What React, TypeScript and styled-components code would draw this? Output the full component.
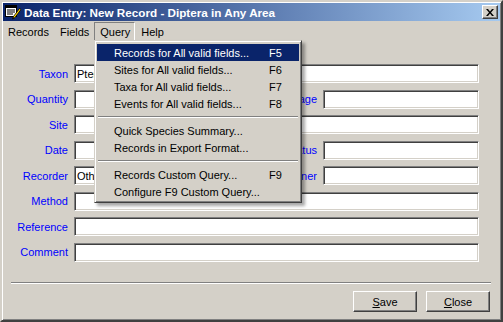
import styled, { createGlobalStyle } from 'styled-components';

const GlobalStyle = createGlobalStyle`
  html, body {
    margin: 0;
    padding: 0;
    background: #d4d0c8;
  }
  body {
    font-family: "Liberation Sans", Arial, sans-serif;
    font-size: 11px;
    color: #000;
  }
`;

const Window = styled.div`
  position: relative;
  width: 503px;
  height: 322px;
  box-sizing: border-box;
  background: #d4d0c8;
  border: 2px solid;
  border-color: #d4d0c8 #404040 #404040 #d4d0c8;
  box-shadow: inset 1px 1px #fff, inset -1px -1px #808080;
  padding: 1px;
  display: flex;
  flex-direction: column;
`;

const TitleBar = styled.div`
  height: 18px;
  display: flex;
  align-items: center;
  padding: 0 2px 0 2px;
  background: linear-gradient(to right, #0a246a, #a6caf0);
  color: #fff;
`;

const TitleText = styled.span`
  flex: 1;
  margin-left: 3px;
  font-weight: bold;
  font-size: 11.7px;
  white-space: nowrap;
`;

const CloseButton = styled.div`
  width: 16px;
  height: 14px;
  box-sizing: border-box;
  background: #d4d0c8;
  border: 1px solid;
  border-color: #fff #404040 #404040 #fff;
  box-shadow: inset -1px -1px #808080;
  display: flex;
  align-items: center;
  justify-content: center;
`;

const MenuBar = styled.div`
  height: 19px;
  margin-top: 1px;
  display: flex;
  align-items: stretch;
`;

const MenuBarItem = styled.div<{ $open?: boolean }>`
  display: flex;
  align-items: center;
  padding: 0 4px 0 5px;
  box-sizing: border-box;
  border: 1px solid;
  border-color: ${(p) => (p.$open ? '#808080 #fff #fff #808080' : 'transparent')};
  &:first-child {
    margin-left: -1px;
  }
`;

const Dropdown = styled.div`
  position: absolute;
  left: 92px;
  top: 38px;
  width: 208px;
  box-sizing: border-box;
  background: #d4d0c8;
  border: 1px solid;
  border-color: #d4d0c8 #404040 #404040 #d4d0c8;
  box-shadow: inset 1px 1px #fff, inset -1px -1px #808080, 3px 3px 3px rgba(0, 0, 0, 0.35);
  padding: 3px 2px 2px 2px;
  z-index: 5;
`;

const DropItem = styled.div<{ $active?: boolean }>`
  height: 17px;
  display: flex;
  align-items: center;
  padding-left: 17px;
  background: ${(p) => (p.$active ? '#0a246a' : 'transparent')};
  color: ${(p) => (p.$active ? '#fff' : '#000')};
  white-space: nowrap;
`;

const DropLabel = styled.span`
  width: 155px;
`;

const DropSep = styled.div`
  height: 1px;
  margin: 4px 1px;
  background: #808080;
  border-bottom: 1px solid #fff;
`;

const Form = styled.div`
  display: grid;
  grid-template-columns: 65px 1fr;
  column-gap: 6px;
  row-gap: 6.5px;
  padding: 23px 21px 0 0;
`;

const Label = styled.div`
  height: 19px;
  display: flex;
  align-items: center;
  justify-content: flex-end;
  color: #0000ff;
  white-space: nowrap;
`;

const Field = styled.div<{ $w?: number }>`
  height: 19px;
  box-sizing: border-box;
  ${(p) => (p.$w ? `width: ${p.$w}px; flex: none;` : 'flex: 1;')}
  background: #fff;
  border: 1px solid;
  border-color: #808080 #fff #fff #808080;
  box-shadow: inset 1px 1px #404040, inset -1px -1px #d4d0c8;
  padding: 0 3px 0 2px;
  display: flex;
  align-items: center;
  white-space: nowrap;
  overflow: hidden;
`;

const Pair = styled.div`
  display: flex;
  align-items: center;
  gap: 6px;
`;

const PairLabel = styled(Label)`
  flex: 1;
`;

const Footer = styled.div`
  margin-top: auto;
  padding: 0 9px 7px 8px;
`;

const Separator = styled.div`
  height: 1px;
  background: #808080;
  border-bottom: 1px solid #fff;
`;

const Buttons = styled.div`
  display: flex;
  justify-content: flex-end;
  gap: 9px;
  margin-top: 7px;
  padding-right: 1px;
`;

const Button = styled.div`
  width: 64px;
  height: 21px;
  box-sizing: border-box;
  background: #d4d0c8;
  border: 1px solid;
  border-color: #fff #404040 #404040 #fff;
  box-shadow: inset -1px -1px #808080;
  display: flex;
  align-items: center;
  justify-content: center;
`;

function AppIcon() {
  return (
    <svg width="16" height="16" viewBox="0 0 16 16">
      <rect x="0.5" y="1.5" width="11" height="11" fill="#fff" stroke="#000" />
      <rect x="1" y="2" width="10" height="2" fill="#000" />
      <line x1="2" y1="6" x2="10" y2="6" stroke="#000" />
      <line x1="2" y1="8" x2="10" y2="8" stroke="#000" />
      <line x1="2" y1="10" x2="8" y2="10" stroke="#000" />
      <path d="M14.5 4.5 L8.5 12.5 L7.5 15 L10 13.5 L16 5.5 Z" fill="#ffd800" stroke="#000" strokeWidth="0.8" />
      <path d="M7.5 15 L8.2 13.2 L9.2 14 Z" fill="#000" />
    </svg>
  );
}

function CloseGlyph() {
  return (
    <svg width="8" height="7" viewBox="0 0 8 7">
      <path d="M0 0 L2 0 L4 2.5 L6 0 L8 0 L5 3.5 L8 7 L6 7 L4 4.5 L2 7 L0 7 L3 3.5 Z" fill="#000" />
    </svg>
  );
}

export default function App() {
  return (
    <>
      <GlobalStyle />
      <Window>
        <TitleBar>
          <AppIcon />
          <TitleText>Data Entry: New Record - Diptera in Any Area</TitleText>
          <CloseButton>
            <CloseGlyph />
          </CloseButton>
        </TitleBar>
        <MenuBar>
          <MenuBarItem>Records</MenuBarItem>
          <MenuBarItem>Fields</MenuBarItem>
          <MenuBarItem $open>Query</MenuBarItem>
          <MenuBarItem>Help</MenuBarItem>
        </MenuBar>

        <Form>
          <Label>Taxon</Label>
          <Field>Pterostichus</Field>

          <Label>Quantity</Label>
          <Pair>
            <Field $w={180} />
            <PairLabel>Stage</PairLabel>
            <Field $w={156} />
          </Pair>

          <Label>Site</Label>
          <Field />

          <Label>Date</Label>
          <Pair>
            <Field $w={180} />
            <PairLabel>Status</PairLabel>
            <Field $w={156} />
          </Pair>

          <Label>Recorder</Label>
          <Pair>
            <Field $w={180}>Other</Field>
            <PairLabel>Determiner</PairLabel>
            <Field $w={156} />
          </Pair>

          <Label>Method</Label>
          <Field />

          <Label>Reference</Label>
          <Field />

          <Label>Comment</Label>
          <Field />
        </Form>

        <Footer>
          <Separator />
          <Buttons>
            <Button>
              <span>
                <u>S</u>ave
              </span>
            </Button>
            <Button>
              <span>
                <u>C</u>lose
              </span>
            </Button>
          </Buttons>
        </Footer>

        <Dropdown>
          <DropItem $active>
            <DropLabel>Records for All valid fields...</DropLabel>F5
          </DropItem>
          <DropItem>
            <DropLabel>Sites for All valid fields...</DropLabel>F6
          </DropItem>
          <DropItem>
            <DropLabel>Taxa for All valid fields...</DropLabel>F7
          </DropItem>
          <DropItem>
            <DropLabel>Events for All valid fields...</DropLabel>F8
          </DropItem>
          <DropSep />
          <DropItem>
            <DropLabel>Quick Species Summary...</DropLabel>
          </DropItem>
          <DropItem>
            <DropLabel>Records in Export Format...</DropLabel>
          </DropItem>
          <DropSep />
          <DropItem>
            <DropLabel>Records Custom Query...</DropLabel>F9
          </DropItem>
          <DropItem>
            <DropLabel>Configure F9 Custom Query...</DropLabel>
          </DropItem>
        </Dropdown>
      </Window>
    </>
  );
}
